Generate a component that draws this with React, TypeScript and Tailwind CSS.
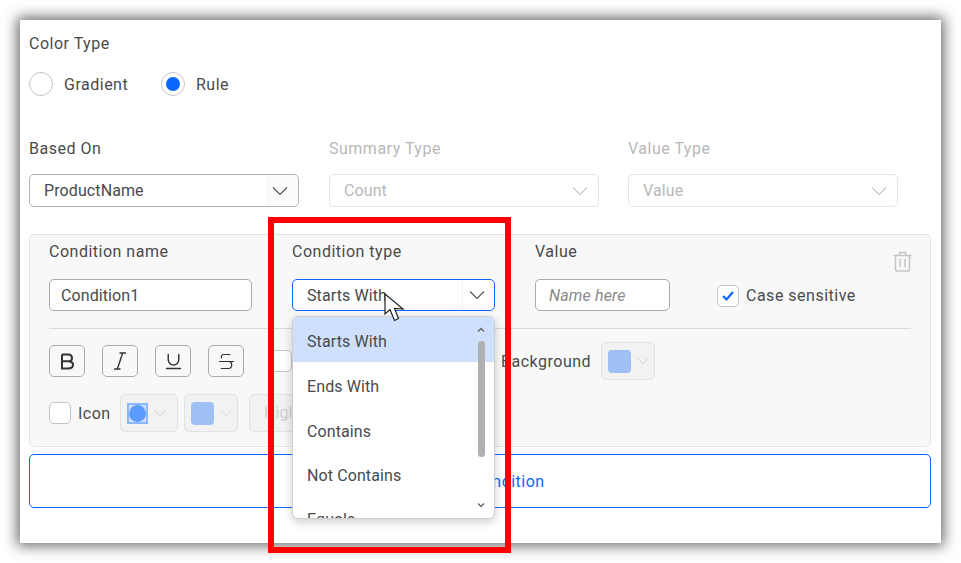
import React from "react";
import { Plus, Underline, Strikethrough } from "lucide-react";

const Chevron = ({ className = "", color = "#555" }: { className?: string; color?: string }) => (
  <svg className={className} width="16" height="10" viewBox="0 0 16 10" fill="none" stroke={color} strokeWidth="1.2">
    <path d="M1 1.5 L8 8.5 L15 1.5" />
  </svg>
);

const Select = ({ value, disabled, focus, w }: { value: string; disabled?: boolean; focus?: boolean; w: string }) => (
  <div
    className={`flex items-center h-[33px] rounded-[5px] border ${w} ${
      focus ? "border-[#0b66ff] bg-white" : disabled ? "border-[#e4e4e4] bg-white" : "border-[#b5b5b5] bg-white"
    }`}
  >
    <span className={`flex-1 pl-[14px] pt-[1px] text-[16px] tracking-[0.1px] ${disabled ? "text-[#b8b8b8]" : "text-[#4a4a4a]"}`}>{value}</span>
    <span className={`flex h-full w-[32px] items-center rounded-r-[5px] pl-[6px] ${focus ? "border-l border-[#f0f0f0]" : disabled ? "" : "bg-[#fbfbfb]"}`}>
      <Chevron color={disabled ? "#c8c8c8" : "#555"} />
    </span>
  </div>
);

const FormatButton = ({ children }: { children: React.ReactNode }) => (
  <div className="flex h-[32px] w-[36px] items-center justify-center rounded-[5px] border border-[#aaa] bg-[#f8f8f8] text-[#333]">
    {children}
  </div>
);

const Swatch = ({ w, children }: { w: string; children: React.ReactNode }) => (
  <div className={`flex h-[38px] items-center gap-[4px] rounded-[5px] border border-[#e2e2e2] bg-[#f2f2f2] pl-[6px] ${w}`}>
    {children}
    <Chevron color="#d0d0d0" className="scale-75" />
  </div>
);

const Box = () => <span className="block h-[22px] w-[22px] rounded-[5px] border border-[#c4c4c4] bg-white" />;

const Field = ({ label, disabled, children }: { label: string; disabled?: boolean; children: React.ReactNode }) => (
  <div className="flex flex-col">
    <span className={`h-[20px] pt-[1px] text-[16px] leading-[20px] tracking-[0.5px] ${disabled ? "text-[#b8b8b8]" : "text-[#4a4a4a]"}`}>{label}</span>
    {children}
  </div>
);

export default function App() {
  return (
    <div className="h-[563px] w-[961px] overflow-hidden bg-white p-[20px] font-['Roboto',sans-serif]">
      <div className="relative h-[523px] w-[921px] bg-white pl-[9px] pr-[10px] pt-[13px] shadow-[0_0_13px_3px_rgba(0,0,0,0.58)]">
        <div className="h-[20px] pt-[1px] text-[16px] leading-[20px] tracking-[0.5px] text-[#4a4a4a]">Color Type</div>

        <div className="mt-[19px] flex h-[24px] items-center text-[16px] tracking-[0.5px] text-[#4a4a4a]">
          <span className="block h-[24px] w-[24px] rounded-full border border-[#c4c4c4] bg-white" />
          <span className="ml-[11px] w-[97px] pt-[1px]">Gradient</span>
          <span className="flex h-[24px] w-[24px] items-center justify-center rounded-full border border-[#c4c4c4] bg-white">
            <span className="mb-[1px] block h-[14px] w-[14px] rounded-full bg-[#0b66ff]" />
          </span>
          <span className="ml-[11px] pt-[1px]">Rule</span>
        </div>

        <div className="mt-[42px] flex">
          <div className="w-[300px]">
            <Field label="Based On">
              <div className="mt-[16px]">
                <Select value="ProductName" w="w-[270px]" />
              </div>
            </Field>
          </div>
          <div className="w-[299px]">
            <Field label="Summary Type" disabled>
              <div className="mt-[16px]">
                <Select value="Count" disabled w="w-[270px]" />
              </div>
            </Field>
          </div>
          <div>
            <Field label="Value Type" disabled>
              <div className="mt-[16px]">
                <Select value="Value" disabled w="w-[270px]" />
              </div>
            </Field>
          </div>
        </div>

        <div className="mt-[27px] h-[213px] rounded-[5px] border border-[#e5e5e5] bg-[#f8f8f8] px-[19px] pt-[6px]">
          <div className="flex items-start">
            <div className="mr-[40px] w-[203px]">
              <Field label="Condition name">
                <div className="mt-[18px] flex h-[32px] items-center rounded-[5px] border border-[#aaa] bg-white pl-[11px] pt-[1px] text-[16px] tracking-[0.1px] text-[#4a4a4a]">
                  Condition1
                </div>
              </Field>
            </div>
            <div className="mr-[40px] w-[203px]">
              <Field label="Condition type">
                <div className="mt-[18px]">
                  <Select value="Starts With" focus w="w-[203px] !h-[32px]" />
                </div>
              </Field>
            </div>
            <div className="mr-[47px] w-[135px]">
              <Field label="Value">
                <div className="mt-[18px] flex h-[32px] items-center rounded-[5px] border border-[#aaa] bg-white pl-[13px] pt-[1px] text-[16px] italic tracking-[0.15px] text-[#8a8a8a]">
                  Name here
                </div>
              </Field>
            </div>
            <div className="mt-[43px] flex items-center">
              <span className="flex h-[22px] w-[22px] items-center justify-center rounded-[5px] border border-[#c4c4c4] bg-white">
                <svg width="14" height="12" viewBox="0 0 14 12" fill="none" stroke="#0b66ff" strokeWidth="2.2">
                  <path d="M2 6 L5.5 9.5 L12 2" />
                </svg>
              </span>
              <span className="ml-[7px] text-[16px] tracking-[0.5px] text-[#4a4a4a]">Case sensitive</span>
            </div>
            <svg className="ml-auto mr-[-1px] mt-[10px]" width="19" height="21" viewBox="0 0 19 21" fill="none" stroke="#c4c4c4" strokeWidth="1.5">
              <path d="M0.5 4.5 H18.5 M6.5 4.5 V1.5 H12.5 V4.5 M2.5 4.5 V18.5 Q2.5 20 4 20 H15 Q16.5 20 16.5 18.5 V4.5 M7 8 V16 M12 8 V16" />
            </svg>
          </div>

          <div className="mt-[17px] h-px bg-[#d8d8d8]" />

          <div className="mt-[16px] flex h-[32px] items-center">
            <FormatButton>
              <svg width="14" height="17" viewBox="0 0 14 17" fill="none" stroke="#333" strokeWidth="2">
                <path d="M2 1.5 H8 Q12 1.5 12 5 Q12 8.3 8 8.3 H2 M8 8.3 Q13 8.3 13 11.8 Q13 15.5 8 15.5 H2 V1.5" />
              </svg>
            </FormatButton>
            <div className="ml-[17px]">
              <FormatButton>
                <svg width="14" height="18" viewBox="0 0 14 18" fill="none" stroke="#333" strokeWidth="1.4">
                  <path d="M6.5 1 H13 M1 17 H7.5 M9.7 1 L4.3 17" />
                </svg>
              </FormatButton>
            </div>
            <div className="ml-[17px]">
              <FormatButton>
                <Underline size={21} strokeWidth={1.6} color="#333" />
              </FormatButton>
            </div>
            <div className="ml-[17px]">
              <FormatButton>
                <Strikethrough size={21} strokeWidth={1.4} color="#333" />
              </FormatButton>
            </div>
            <div className="ml-[26px]">
              <Box />
            </div>
            <span className="ml-[209px] pt-[2px] text-[16px] tracking-[0.5px] text-[#4a4a4a]">Background</span>
            <div className="ml-[10px]">
              <Swatch w="w-[54px]">
                <span className="block h-[23px] w-[23px] rounded-[4px] bg-[#9fbff5]" />
              </Swatch>
            </div>
          </div>

          <div className="mt-[17px] flex h-[38px] items-center">
            <Box />
            <span className="ml-[7px] w-[42px] pt-[1px] text-[16px] tracking-[0.5px] text-[#4a4a4a]">Icon</span>
            <Swatch w="w-[58px]">
              <span className="flex h-[21px] w-[21px] items-center justify-center border-2 border-[#8ab8ff] bg-[#cfe0fd]">
                <span className="block h-[17px] w-[17px] shrink-0 rounded-full bg-[#5c9cff]" />
              </span>
            </Swatch>
            <div className="ml-[6px]">
              <Swatch w="w-[54px]">
                <span className="block h-[23px] w-[23px] rounded-[4px] bg-[#9fbff5]" />
              </Swatch>
            </div>
            <div className="ml-[11px] flex h-[38px] w-[120px] items-center rounded-[5px] border border-[#e2e2e2] bg-[#f2f2f2] pl-[14px] text-[16px] tracking-[0.1px] text-[#d0d0d0]">
              High
            </div>
          </div>
        </div>

        <div className="mt-[7px] flex h-[54px] items-center justify-center gap-[6px] rounded-[5px] border border-[#0b66ff] bg-white pt-[1px] text-[16px] tracking-[0.5px] text-[#0b66ff]">
          <Plus size={16} />
          Add Condition
        </div>

        {/* open dropdown menu */}
        <div className="absolute left-[272px] top-[296px] h-[203px] w-[203px] overflow-hidden rounded-[6px] border border-[#cfcfcf] bg-white text-[16px] tracking-[0.1px] text-[#4a4a4a] shadow-[0_3px_10px_rgba(0,0,0,0.2)]">
          <div className="flex h-[45px] items-center bg-[#cfe0fd] pl-[14px] pt-[5px]">Starts With</div>
          <div className="flex h-[46px] items-center pl-[14px] pt-[4px]">Ends With</div>
          <div className="flex h-[44px] items-center pl-[14px] pt-[3px]">Contains</div>
          <div className="flex h-[44px] items-center pl-[14px] pt-[3px]">Not Contains</div>
          <div className="flex h-[44px] items-center pl-[14px] pt-[3px]">Equals</div>
          <svg className="absolute right-[9px] top-[10px]" width="8" height="6" viewBox="0 0 8 6" fill="none" stroke="#666" strokeWidth="1.4">
            <path d="M1 4.5 L4 1.5 L7 4.5" />
          </svg>
          <div className="absolute right-[9px] top-[24px] h-[116px] w-[7px] rounded-full bg-[#b0b0b0]" />
          <svg className="absolute bottom-[10px] right-[9px]" width="8" height="6" viewBox="0 0 8 6" fill="none" stroke="#666" strokeWidth="1.4">
            <path d="M1 1.5 L4 4.5 L7 1.5" />
          </svg>
        </div>

        {/* pointer */}
        <svg className="absolute left-[364px] top-[273px]" width="21" height="29" viewBox="0 0 21 29" fill="#fff" stroke="#222" strokeWidth="1.2">
          <path d="M1 1 V21 L6 16.5 L10.5 27.5 L14.5 25.5 L10.5 15.5 L19 16 Z" />
        </svg>

        {/* red annotation frame */}
        <div className="pointer-events-none absolute left-[248px] top-[197px] h-[336px] w-[243px] border-[6px] border-[#ff0000]" />
      </div>
    </div>
  );
}
